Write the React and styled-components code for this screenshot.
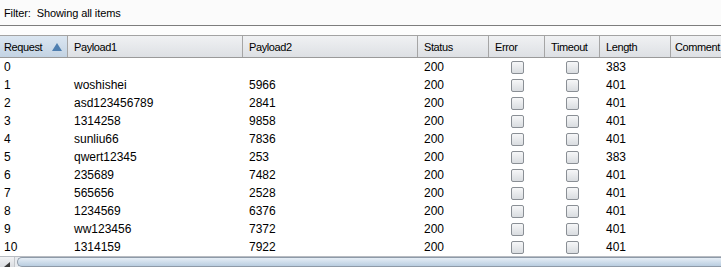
import React from "react";
import styled, { createGlobalStyle } from "styled-components";

const Global = createGlobalStyle`
  html, body { margin: 0; padding: 0; background: #ffffff; }
  body { font-family: "Liberation Sans", Arial, sans-serif; font-size: 12px; color: #000; }
`;

const COLS = "68px 175px 175px 71px 56px 55px 71px 1fr";

const Page = styled.div`
  width: 721px;
  height: 267px;
  display: flex;
  flex-direction: column;
  overflow: hidden;
  background: #fff;
`;

const FilterBar = styled.div`
  height: 25px;
  display: flex;
  align-items: center;
  padding-left: 4px;
  background: #fbfbfb;
  border-bottom: 1px solid #7d7d7d;
  font-size: 11px;
  letter-spacing: -0.1px;
  white-space: pre;
`;

const Gap = styled.div`
  height: 9px;
  background: #fdfdfd;
`;

const HeaderRow = styled.div`
  display: grid;
  grid-template-columns: ${COLS};
  height: 21px;
  border-top: 1px solid #a3a3a3;
  border-bottom: 1px solid #9a9a9a;
  font-size: 11px;
  letter-spacing: -0.4px;
`;

const HeadCell = styled.div`
  display: flex;
  align-items: center;
  justify-content: space-between;
  padding: 0 5px 0 ${(p) => (p.$first ? 4 : 6)}px;
  border-right: 1px solid #a5a5a5;
  white-space: nowrap;
  background: ${(p) =>
    p.$sorted
      ? "linear-gradient(#dbe6f1, #c3d3e3)"
      : "linear-gradient(#f0f1f3, #dde0e4)"};
  &:last-child { border-right: none; padding: 0 0 0 4px; }
`;

const SortArrow = styled.span`
  width: 0;
  height: 0;
  border-left: 5px solid transparent;
  border-right: 5px solid transparent;
  border-bottom: 8px solid #4f7fb0;
`;

const Body = styled.div`
  flex: 1;
  display: flex;
  flex-direction: column;
`;

const Row = styled.div`
  display: grid;
  grid-template-columns: ${COLS};
  height: 18px;
  align-items: center;
`;

const Cell = styled.div`
  padding-left: ${(p) => (p.$first ? 4 : 6)}px;
  white-space: nowrap;
  overflow: hidden;
`;

const CheckCell = styled.div`
  display: flex;
  justify-content: center;
  align-items: center;
`;

const Box = styled.span`
  width: 11px;
  height: 11px;
  border: 1px solid #8a8f95;
  border-radius: 2px;
  background: linear-gradient(#f6f7f8, #d9dce0);
  box-sizing: content-box;
`;

const ScrollBar = styled.div`
  height: 10px;
  display: flex;
  border-top: 1px solid #b8bcc2;
  background: #e8ebef;
  margin-top: auto;
`;

const ArrowBtn = styled.div`
  width: 14px;
  display: flex;
  align-items: flex-end;
  justify-content: center;
  background: linear-gradient(#f2f3f5, #dadde1);
  border-right: 1px solid #c3c6ca;
`;

const Thumb = styled.div`
  flex: 1;
  margin-left: 2px;
  border: 1px solid #8e9aa8;
  border-right: none;
  border-radius: 5px 0 0 5px;
  background: linear-gradient(#e6eef6, #b9cde0);
`;

const rows = [
  ["0", "", "", "200", "383"],
  ["1", "woshishei", "5966", "200", "401"],
  ["2", "asd123456789", "2841", "200", "401"],
  ["3", "1314258", "9858", "200", "401"],
  ["4", "sunliu66", "7836", "200", "401"],
  ["5", "qwert12345", "253", "200", "383"],
  ["6", "235689", "7482", "200", "401"],
  ["7", "565656", "2528", "200", "401"],
  ["8", "1234569", "6376", "200", "401"],
  ["9", "ww123456", "7372", "200", "401"],
  ["10", "1314159", "7922", "200", "401"],
];

const headers = ["Payload1", "Payload2", "Status", "Error", "Timeout", "Length", "Comment"];

export default function App() {
  return (
    <Page>
      <Global />
      <FilterBar>{"Filter:  Showing all items"}</FilterBar>
      <Gap />
      <HeaderRow>
        <HeadCell $first $sorted>
          <span>Request</span>
          <SortArrow />
        </HeadCell>
        {headers.map((h) => (
          <HeadCell key={h}>
            <span>{h}</span>
          </HeadCell>
        ))}
      </HeaderRow>
      <Body>
        {rows.map((r) => (
          <Row key={r[0]}>
            <Cell $first>{r[0]}</Cell>
            <Cell>{r[1]}</Cell>
            <Cell>{r[2]}</Cell>
            <Cell>{r[3]}</Cell>
            <CheckCell><Box /></CheckCell>
            <CheckCell><Box /></CheckCell>
            <Cell>{r[4]}</Cell>
            <Cell />
          </Row>
        ))}
      </Body>
      <ScrollBar>
        <ArrowBtn>
          <svg width="8" height="6" viewBox="0 0 8 6">
            <path d="M1 6 L7 1 L7 6 Z" fill="#3a3a3a" />
          </svg>
        </ArrowBtn>
        <Thumb />
      </ScrollBar>
    </Page>
  );
}
